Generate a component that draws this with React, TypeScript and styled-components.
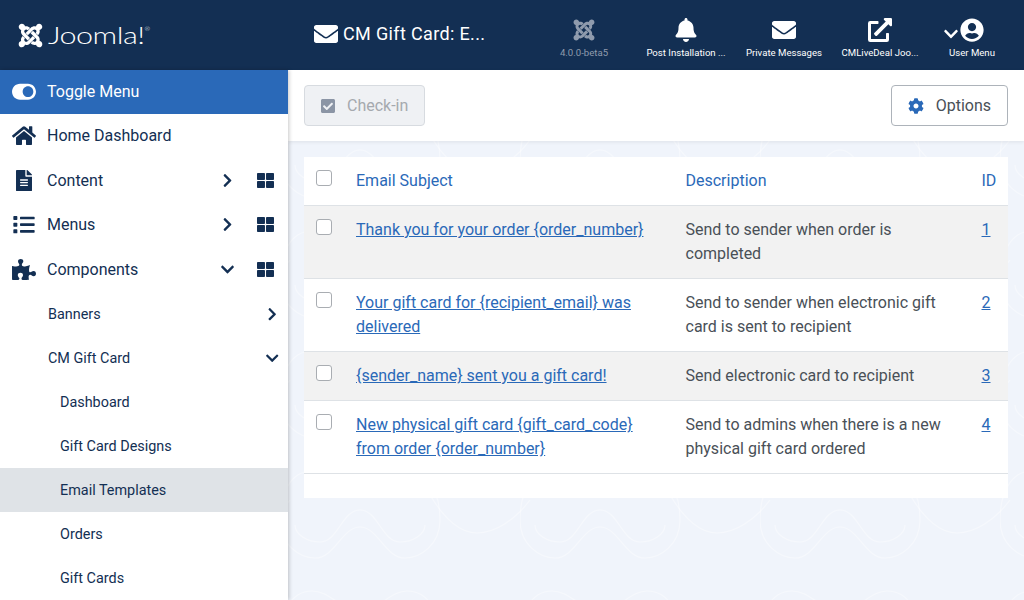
import * as React from "react";
import styled, { createGlobalStyle } from "styled-components";
import {
  FaBell,
  FaCheckSquare,
  FaChevronDown,
  FaChevronRight,
  FaCog,
  FaEnvelope,
  FaExternalLinkAlt,
  FaFileAlt,
  FaHome,
  FaJoomla,
  FaList,
  FaPuzzlePiece,
  FaThLarge,
  FaToggleOn,
  FaUserCircle,
} from "react-icons/fa";

const navy = "#132f53";
const blue = "#2a69b8";

// faint repeating swirl behind the content
const swirl = encodeURIComponent(
  `<svg xmlns="http://www.w3.org/2000/svg" width="240" height="120" fill="none" stroke="#fff" stroke-opacity=".38" stroke-width="1.2"><path d="M32 1C10 1 0 25 0 50s20 38 35 38c20 0 27-31 45-31s25 31 45 31c15 0 35-13 35-38s-10-49-33-49c-17 0-27 19-47 19S50 1 32 1z"/><path d="M15 55c0 10 13 17 25 17 18 0 22-32 40-32s22 32 40 32c12 0 25-7 25-17"/><path d="M150 25c15 25 30 38 47 38 18 0 38-13 53-33M-90 25c15 25 30 38 47 38 18 0 38-13 53-33"/></svg>`
);

const GlobalStyle = createGlobalStyle`
  html, body {
    margin: 0;
    height: 100%;
    overflow: hidden;
  }
  body {
    font-family: Roboto, "Liberation Sans", sans-serif;
    font-size: 16px;
    color: #495057;
    background: #f0f4fb;
  }
`;

const SPage = styled.div`
  display: flex;
  flex-direction: column;
  width: 1024px;
  height: 600px;
  overflow: hidden;
`;

const SHeader = styled.header`
  flex: none;
  display: flex;
  align-items: stretch;
  height: 70px;
  background: ${navy};
  color: #fff;
`;

const SBrand = styled.div`
  flex: none;
  display: flex;
  align-items: center;
  gap: 4px;
  width: 288px;
  padding-left: 17px;
  box-sizing: border-box;
`;

const SLogoText = styled.span`
  font-family: Lato, sans-serif;
  font-weight: 300;
  font-size: 23px;
  line-height: 30px;
  letter-spacing: -0.4px;
  transform: scaleX(1.33);
  transform-origin: left center;
`;

const SLogoMark = styled.sup`
  font-size: 5px;
  line-height: 5px;
  letter-spacing: 0;
  vertical-align: 13px;
`;

const STitle = styled.div`
  flex: 1;
  display: flex;
  align-items: center;
  gap: 5px;
  padding: 0 0 3px 26px;
  font-size: 18px;
  letter-spacing: 0.35px;
`;

const STopItems = styled.nav`
  flex: none;
  display: flex;
  padding-right: 8px;
`;

const STopItem = styled.div<{ $width: number; $muted?: boolean }>`
  position: relative;
  display: flex;
  flex-direction: column;
  align-items: center;
  width: ${(p) => p.$width}px;
  padding-top: 18px;
  box-sizing: border-box;
  color: ${(p) => (p.$muted ? "#8f9bad" : "#fff")};
`;

const STopIcon = styled.div`
  display: flex;
  align-items: center;
  justify-content: center;
  height: 24px;
  font-size: 24px;
`;

const STopLabel = styled.span`
  margin-top: 5px;
  font-size: 9.6px;
  line-height: 12px;
  white-space: nowrap;
`;

const SUserCaret = styled.span`
  position: absolute;
  left: 15px;
  top: 26px;
  font-size: 16px;
  line-height: 16px;
`;

const SBody = styled.div`
  flex: 1;
  display: flex;
  min-height: 0;
`;

const SSidebar = styled.aside`
  flex: none;
  position: relative;
  z-index: 2;
  width: 288px;
  background: #fff;
  box-shadow: 1px 0 4px rgba(0, 0, 0, 0.22);
`;

const SToggle = styled.div`
  display: flex;
  align-items: center;
  gap: 11px;
  height: 44px;
  padding: 0 0 1px 12px;
  box-sizing: border-box;
  background: ${blue};
  color: #fff;
`;

const SMenuIcon = styled.span`
  display: flex;
  justify-content: center;
  width: 24px;
  svg {
    width: 24px;
    height: 21.3px;
  }
`;

const SMenuRow = styled.div`
  display: flex;
  align-items: center;
  gap: 11px;
  height: 44.5px;
  padding: 0 0 1px 12px;
  box-sizing: border-box;
  color: ${navy};
`;

const SMenuText = styled.span`
  flex: 1;
`;

const SCaret = styled.span`
  display: flex;
  justify-content: center;
  width: 20px;
  font-size: 15px;
`;

const SGrid = styled.span`
  display: flex;
  justify-content: center;
  width: 17px;
  margin: 0 14px 0 9px;
  font-size: 17px;
`;

const SSubRow = styled.div<{ $level: number; $active?: boolean }>`
  display: flex;
  align-items: center;
  justify-content: space-between;
  height: 44px;
  padding: 0 9px 0 ${(p) => (p.$level === 1 ? 48 : 60)}px;
  font-size: 14.4px;
  color: ${navy};
  background: ${(p) => (p.$active ? "#dfe3e7" : "transparent")};
`;

const SMain = styled.main`
  flex: 1;
  min-width: 0;
  background-color: #f0f4fb;
  background-image: url("data:image/svg+xml,${swirl}");
  background-position: 232px 40px;
`;

const SToolbar = styled.div`
  display: flex;
  justify-content: space-between;
  align-items: center;
  height: 71px;
  padding: 0 16px;
  background: #fff;
  box-shadow: 0 1px 4px rgba(0, 0, 0, 0.08);
`;

const SButton = styled.button<{ $disabled?: boolean }>`
  display: flex;
  align-items: center;
  gap: 12px;
  height: 41px;
  padding: 0 16px;
  border: 1px solid ${(p) => (p.$disabled ? "#d7dbe0" : "#adb3ba")};
  border-radius: 4px;
  background: ${(p) => (p.$disabled ? "#eff1f4" : "#fff")};
  color: ${(p) => (p.$disabled ? "#a5a9ae" : "#495057")};
  font: inherit;
  svg {
    width: ${(p) => (p.$disabled ? 14 : 16)}px;
    height: 16px;
    color: ${(p) => (p.$disabled ? "#8b95a5" : blue)};
  }
`;

const SCard = styled.div`
  margin: 16px 16px 0;
  padding-bottom: 24px;
  background: #fff;
`;

const STable = styled.table`
  width: 100%;
  table-layout: fixed;
  border-collapse: collapse;
  line-height: 24px;
`;

const SHeadCell = styled.th`
  padding: 12px;
  border-bottom: 1px solid #dee2e6;
  color: ${blue};
  font-weight: 400;
  text-align: left;
  vertical-align: top;
`;

const SRow = styled.tr<{ $striped: boolean }>`
  background: ${(p) => (p.$striped ? "#f2f2f2" : "#fff")};
`;

const SCell = styled.td`
  padding: 12px;
  border-bottom: 1px solid #dee2e6;
  vertical-align: top;
`;

const SLink = styled.a`
  color: ${blue};
  text-decoration: underline;
`;

const SCheck = styled.input.attrs({ type: "checkbox" })`
  display: block;
  width: 16px;
  height: 16px;
  margin: 1px 0 0;
  appearance: none;
  background: #fff;
  border: 1px solid #a9adb2;
  border-radius: 3px;
`;

const rows = [
  {
    id: 1,
    subject: "Thank you for your order {order_number}",
    description: "Send to sender when order is completed",
  },
  {
    id: 2,
    subject: "Your gift card for {recipient_email} was delivered",
    description: "Send to sender when electronic gift card is sent to recipient",
  },
  {
    id: 3,
    subject: "{sender_name} sent you a gift card!",
    description: "Send electronic card to recipient",
  },
  {
    id: 4,
    subject: "New physical gift card {gift_card_code} from order {order_number}",
    description: "Send to admins when there is a new physical gift card ordered",
  },
];

const App = () => (
  <SPage>
    <GlobalStyle />
    <SHeader>
      <SBrand>
        <FaJoomla size={27} />
        <SLogoText>
          Joomla!<SLogoMark>®</SLogoMark>
        </SLogoText>
      </SBrand>
      <STitle>
        <FaEnvelope size={24} />
        <span>CM Gift Card: E...</span>
      </STitle>
      <STopItems>
        <STopItem $width={104} $muted>
          <STopIcon>
            <FaJoomla />
          </STopIcon>
          <STopLabel>4.0.0-beta5</STopLabel>
        </STopItem>
        <STopItem $width={100}>
          <STopIcon>
            <FaBell />
          </STopIcon>
          <STopLabel>Post Installation ...</STopLabel>
        </STopItem>
        <STopItem $width={96}>
          <STopIcon>
            <FaEnvelope />
          </STopIcon>
          <STopLabel>Private Messages</STopLabel>
        </STopItem>
        <STopItem $width={96}>
          <STopIcon>
            <FaExternalLinkAlt />
          </STopIcon>
          <STopLabel>CMLiveDeal Joo...</STopLabel>
        </STopItem>
        <STopItem $width={88}>
          <SUserCaret>
            <FaChevronDown />
          </SUserCaret>
          <STopIcon>
            <FaUserCircle />
          </STopIcon>
          <STopLabel>User Menu</STopLabel>
        </STopItem>
      </STopItems>
    </SHeader>
    <SBody>
      <SSidebar>
        <SToggle>
          <SMenuIcon>
            <FaToggleOn />
          </SMenuIcon>
          <span>Toggle Menu</span>
        </SToggle>
        <SMenuRow>
          <SMenuIcon>
            <FaHome />
          </SMenuIcon>
          <SMenuText>Home Dashboard</SMenuText>
        </SMenuRow>
        <SMenuRow>
          <SMenuIcon>
            <FaFileAlt />
          </SMenuIcon>
          <SMenuText>Content</SMenuText>
          <SCaret>
            <FaChevronRight />
          </SCaret>
          <SGrid>
            <FaThLarge />
          </SGrid>
        </SMenuRow>
        <SMenuRow>
          <SMenuIcon>
            <FaList />
          </SMenuIcon>
          <SMenuText>Menus</SMenuText>
          <SCaret>
            <FaChevronRight />
          </SCaret>
          <SGrid>
            <FaThLarge />
          </SGrid>
        </SMenuRow>
        <SMenuRow>
          <SMenuIcon>
            <FaPuzzlePiece />
          </SMenuIcon>
          <SMenuText>Components</SMenuText>
          <SCaret>
            <FaChevronDown />
          </SCaret>
          <SGrid>
            <FaThLarge />
          </SGrid>
        </SMenuRow>
        <SSubRow $level={1}>
          <span>Banners</span>
          <FaChevronRight size={14.4} />
        </SSubRow>
        <SSubRow $level={1}>
          <span>CM Gift Card</span>
          <FaChevronDown size={14.4} />
        </SSubRow>
        <SSubRow $level={2}>Dashboard</SSubRow>
        <SSubRow $level={2}>Gift Card Designs</SSubRow>
        <SSubRow $level={2} $active>
          Email Templates
        </SSubRow>
        <SSubRow $level={2}>Orders</SSubRow>
        <SSubRow $level={2}>Gift Cards</SSubRow>
      </SSidebar>
      <SMain>
        <SToolbar>
          <SButton $disabled>
            <FaCheckSquare />
            Check-in
          </SButton>
          <SButton>
            <FaCog />
            Options
          </SButton>
        </SToolbar>
        <SCard>
          <STable>
            <colgroup>
              <col width={40} />
              <col width={329.5} />
              <col width={296} />
              <col width={38.5} />
            </colgroup>
            <thead>
              <tr>
                <SHeadCell>
                  <SCheck />
                </SHeadCell>
                <SHeadCell>Email Subject</SHeadCell>
                <SHeadCell>Description</SHeadCell>
                <SHeadCell>ID</SHeadCell>
              </tr>
            </thead>
            <tbody>
              {rows.map((row, i) => (
                <SRow key={row.id} $striped={i % 2 === 0}>
                  <SCell>
                    <SCheck />
                  </SCell>
                  <SCell>
                    <SLink href="#">{row.subject}</SLink>
                  </SCell>
                  <SCell>{row.description}</SCell>
                  <SCell>
                    <SLink href="#">{row.id}</SLink>
                  </SCell>
                </SRow>
              ))}
            </tbody>
          </STable>
        </SCard>
      </SMain>
    </SBody>
  </SPage>
);

export default App;
